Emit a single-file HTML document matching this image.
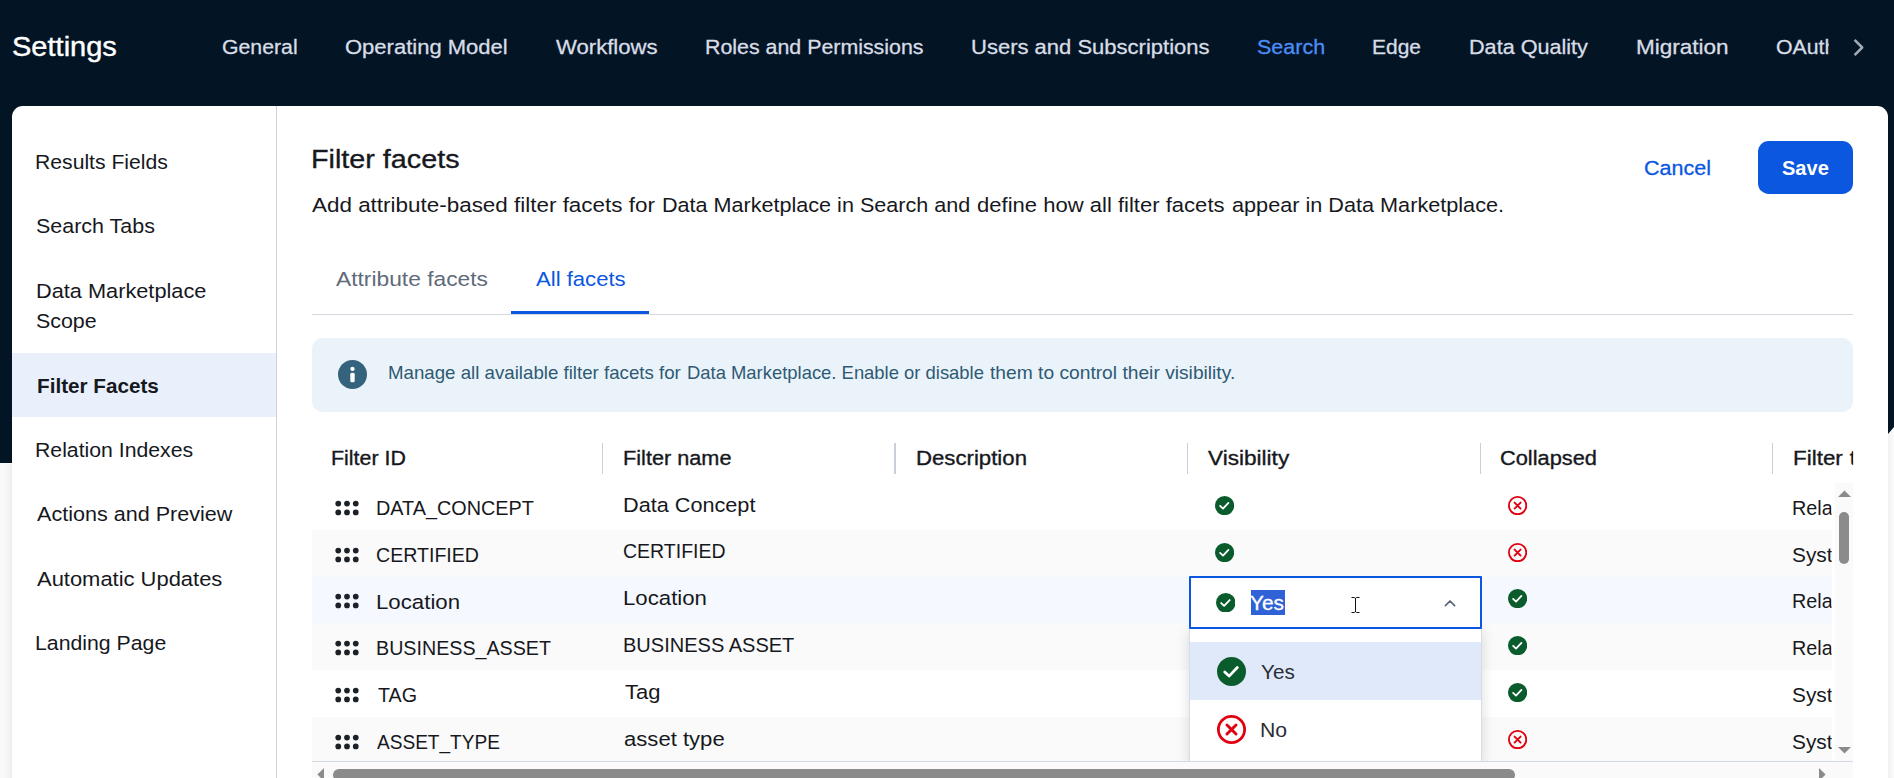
<!DOCTYPE html>
<html lang="en">
<head>
<meta charset="utf-8">
<title>Settings - Filter facets</title>
<style>
*{box-sizing:border-box;margin:0;padding:0}
html,body{width:1894px;height:778px;overflow:hidden}
body{position:relative;background:#f8f8f8;font-family:"Liberation Sans",sans-serif;color:#16181d;font-size:20px}
.abs{position:absolute}
.t{position:absolute;white-space:nowrap;line-height:30px;height:30px;transform-origin:0 50%}
#dark{position:absolute;left:0;top:0;width:1894px;height:463px;background:#031525;clip-path:polygon(0 0,1894px 0,1894px 427px,1888px 434px,1888px 463px,0 463px)}
#leftshade{position:absolute;left:0;top:464px;width:12px;height:314px;background:linear-gradient(to right,#fafafa 0,#f8f8f8 50%,#ededed 100%)}
#rightshade{position:absolute;left:1888px;top:420px;width:6px;height:358px;background:linear-gradient(to left,#fafafa 0,#f1f1f1 100%)}
#panel{position:absolute;left:12px;top:106px;width:1876px;height:700px;background:#fff;border-radius:10.7px 10.7px 0 0}
#sideborder{position:absolute;left:276px;top:106px;width:1px;height:672px;background:#cfd3dc}
#sel{position:absolute;left:12px;top:353px;width:264px;height:64px;background:#e9f0fb}
#savebtn{position:absolute;left:1758px;top:141px;width:95px;height:52.7px;border-radius:10.7px;background:#0b57e0}
#tabline{position:absolute;left:312px;top:314px;width:1541px;height:1px;background:#d3d7e0}
#tabul{position:absolute;left:511px;top:311px;width:138px;height:3px;background:#0b57e0}
#banner{position:absolute;left:312px;top:338px;width:1541px;height:73.7px;border-radius:10.7px;background:#ebf3fa}
.sep{position:absolute;top:443px;width:1.5px;height:31px;background:#c9cfdb}
.row{position:absolute;left:312px;width:1520px;height:46.8px}
.g{background:#fafafa}
.b{background:#f5f8fe}
</style>
</head>
<body>
<div id="leftshade"></div>
<div id="rightshade"></div>
<div id="dark"></div>

<!-- top nav -->
<span class="t" id="settings" style="left:12.22px;top:31.94px;font-size:27px;color:#fff;-webkit-text-stroke:0.4px #fff;transform:scaleX(1.0751)">Settings</span>
<span class="t" id="n1" style="left:222.35px;top:31.65px;font-size:20.5px;color:#d8dde6;-webkit-text-stroke:0.3px #d8dde6;transform:scaleX(1.0370)">General</span>
<span class="t" id="n2" style="left:345.24px;top:31.65px;font-size:20.5px;color:#d8dde6;-webkit-text-stroke:0.3px #d8dde6;transform:scaleX(1.0738)">Operating Model</span>
<span class="t" id="n3" style="left:555.59px;top:31.65px;font-size:20.5px;color:#d8dde6;-webkit-text-stroke:0.3px #d8dde6;transform:scaleX(1.0787)">Workflows</span>
<span class="t" id="n4" style="left:705.15px;top:31.65px;font-size:20.5px;color:#d8dde6;-webkit-text-stroke:0.3px #d8dde6;transform:scaleX(1.0421)">Roles and Permissions</span>
<span class="t" id="n5" style="left:971.11px;top:31.65px;font-size:20.5px;color:#d8dde6;-webkit-text-stroke:0.3px #d8dde6;transform:scaleX(1.0734)">Users and Subscriptions</span>
<span class="t" id="n6" style="left:1256.92px;top:31.65px;font-size:20.5px;color:#4c8df6;-webkit-text-stroke:0.3px #4c8df6;transform:scaleX(1.0485)">Search</span>
<span class="t" id="n7" style="left:1371.97px;top:31.65px;font-size:20.5px;color:#d8dde6;-webkit-text-stroke:0.3px #d8dde6;transform:scaleX(1.0220)">Edge</span>
<span class="t" id="n8" style="left:1468.73px;top:31.65px;font-size:20.5px;color:#d8dde6;-webkit-text-stroke:0.3px #d8dde6;transform:scaleX(1.0542)">Data Quality</span>
<span class="t" id="n9" style="left:1635.50px;top:31.65px;font-size:20.5px;color:#d8dde6;-webkit-text-stroke:0.3px #d8dde6;transform:scaleX(1.0983)">Migration</span>
<span class="t" id="n10" style="left:1776.15px;top:31.65px;font-size:20.5px;color:#d8dde6;-webkit-text-stroke:0.3px #d8dde6;transform:scaleX(1.0358);width:51.32px;overflow:hidden">OAuth</span>
<svg class="abs" id="navchev" style="left:1846px;top:35px" width="24" height="25" viewBox="0 0 24 25"><path d="M8.6 4.9 L16.2 12.5 L8.6 20.1" fill="none" stroke="#a2a9b4" stroke-width="2.5" stroke-linecap="butt" stroke-linejoin="round"/></svg>

<div id="panel"></div>
<div id="sel"></div>
<div id="sideborder"></div>

<!-- sidebar -->
<span class="t" id="s1" style="left:35.43px;top:146.90px;font-size:20.5px;color:#16181d;transform:scaleX(1.0322)">Results Fields</span>
<span class="t" id="s2" style="left:36.14px;top:211.10px;font-size:20.5px;color:#16181d;transform:scaleX(1.0466)">Search Tabs</span>
<span class="t" id="s3" style="left:35.56px;top:275.90px;font-size:20.5px;color:#16181d;transform:scaleX(1.0605)">Data Marketplace</span>
<span class="t" id="s3b" style="left:36.13px;top:305.60px;font-size:20.5px;color:#16181d;transform:scaleX(1.0436)">Scope</span>
<span class="t" id="s4" style="left:36.57px;top:370.80px;font-size:20.5px;color:#16181d;font-weight:bold;transform:scaleX(1.0090)">Filter Facets</span>
<span class="t" id="s5" style="left:35.41px;top:434.60px;font-size:20.5px;color:#16181d;transform:scaleX(1.0356)">Relation Indexes</span>
<span class="t" id="s6" style="left:36.86px;top:498.60px;font-size:20.5px;color:#16181d;transform:scaleX(1.0517)">Actions and Preview</span>
<span class="t" id="s7" style="left:36.60px;top:563.70px;font-size:20.5px;color:#16181d;transform:scaleX(1.0700)">Automatic Updates</span>
<span class="t" id="s8" style="left:35.41px;top:627.70px;font-size:20.5px;color:#16181d;transform:scaleX(1.0369)">Landing Page</span>

<!-- content header -->
<span class="t" id="title" style="left:310.87px;top:143.79px;font-size:26px;color:#16181d;-webkit-text-stroke:0.35px #16181d;transform:scaleX(1.1053)">Filter facets</span>
<span class="t" id="desc0" style="left:312.23px;top:190.00px;font-size:20.5px;color:#16181d;transform:scaleX(1.0943)">Add attribute-based filter facets for</span><span class="t" id="desc1" style="left:661.70px;top:190.00px;font-size:20.5px;color:#16181d;transform:scaleX(1.0526)">Data Marketplace in Search and</span><span class="t" id="desc2" style="left:976.91px;top:190.00px;font-size:20.5px;color:#16181d;transform:scaleX(1.0754)">define how all filter facets</span><span class="t" id="desc3" style="left:1231.88px;top:190.00px;font-size:20.5px;color:#16181d;transform:scaleX(1.0564)">appear in Data Marketplace.</span>
<span class="t" id="cancel" style="left:1644.33px;top:152.80px;font-size:20.5px;color:#0b57e0;-webkit-text-stroke:0.3px #0b57e0;transform:scaleX(1.0494)">Cancel</span>
<div id="savebtn"></div>
<span class="t" id="save" style="left:1781.52px;top:152.80px;font-size:20.5px;color:#fff;font-weight:bold;transform:scaleX(0.9768)">Save</span>
<span class="t" id="tab1" style="left:335.93px;top:263.90px;font-size:20.5px;color:#5f6b7a;transform:scaleX(1.1117)">Attribute facets</span>
<span class="t" id="tab2" style="left:535.93px;top:263.90px;font-size:20.5px;color:#0b57e0;transform:scaleX(1.0777)">All facets</span>
<div id="tabline"></div>
<div id="tabul"></div>

<!-- info banner -->
<div id="banner"></div>
<svg class="abs" id="infoicon" style="left:338px;top:360px" width="29" height="29" viewBox="0 0 29 29"><circle cx="14.5" cy="14.5" r="14.5" fill="#35627c"/><circle cx="14.5" cy="8.9" r="2.15" fill="#fff"/><rect x="12.3" y="12.7" width="4.4" height="9.6" rx="1.6" fill="#fff"/></svg>
<span class="t" id="info0" style="left:387.58px;top:357.62px;font-size:18.4px;color:#2e5a74;transform:scaleX(1.0157)">Manage all available filter facets for</span><span class="t" id="info1" style="left:686.83px;top:357.62px;font-size:18.4px;color:#2e5a74;transform:scaleX(1.0016)">Data Marketplace. Enable or disable</span><span class="t" id="info2" style="left:989.77px;top:357.62px;font-size:18.4px;color:#2e5a74;transform:scaleX(1.0447)">them to control their visibility.</span>

<!-- table header -->
<span class="t" id="h1" style="left:330.58px;top:443.30px;font-size:20.5px;color:#16181d;-webkit-text-stroke:0.35px #16181d;transform:scaleX(1.0433)">Filter ID</span>
<span class="t" id="h2" style="left:623.05px;top:443.30px;font-size:20.5px;color:#16181d;-webkit-text-stroke:0.35px #16181d;transform:scaleX(1.0581)">Filter name</span>
<span class="t" id="h3" style="left:915.92px;top:443.30px;font-size:20.5px;color:#16181d;-webkit-text-stroke:0.35px #16181d;transform:scaleX(1.0823)">Description</span>
<span class="t" id="h4" style="left:1208.33px;top:443.30px;font-size:20.5px;color:#16181d;-webkit-text-stroke:0.35px #16181d;transform:scaleX(1.1020)">Visibility</span>
<span class="t" id="h5" style="left:1499.91px;top:443.30px;font-size:20.5px;color:#16181d;-webkit-text-stroke:0.35px #16181d;transform:scaleX(1.0637)">Collapsed</span>
<span class="t" id="h6" style="left:1793.21px;top:443.30px;font-size:20.5px;color:#16181d;-webkit-text-stroke:0.35px #16181d;word-spacing:0.6px;transform:scaleX(1.0937);width:54.67px;overflow:hidden">Filter type</span>
<div class="sep" style="left:601.8px"></div>
<div class="sep" style="left:894.3px"></div>
<div class="sep" style="left:1186.8px"></div>
<div class="sep" style="left:1479.5px"></div>
<div class="sep" style="left:1771.8px"></div>

<div class="row " style="top:483.00px"></div>
<svg class="abs" style="left:335.10px;top:499.70px" width="24" height="16" viewBox="0 0 24 16" fill="#1c2127"><circle cx="3.25" cy="3.58" r="2.85"/><circle cx="3.25" cy="12.42" r="2.85"/><circle cx="12" cy="3.58" r="2.85"/><circle cx="12" cy="12.42" r="2.85"/><circle cx="20.75" cy="3.58" r="2.85"/><circle cx="20.75" cy="12.42" r="2.85"/></svg>
<span class="t" id="id0" style="left:376.48px;top:492.90px;font-size:20.5px;color:#16181d;transform:scaleX(0.9671)">DATA_CONCEPT</span>
<span class="t" id="nm0" style="left:622.96px;top:489.65px;font-size:20.5px;color:#16181d;transform:scaleX(1.0564)">Data Concept</span>
<span class="t" id="ty0" style="left:1792.30px;top:492.70px;font-size:20.5px;color:#16181d;transform:scaleX(0.9634);width:41.21px;overflow:hidden">Relation</span>
<div class="row g" style="top:529.80px"></div>
<svg class="abs" style="left:335.10px;top:546.50px" width="24" height="16" viewBox="0 0 24 16" fill="#1c2127"><circle cx="3.25" cy="3.58" r="2.85"/><circle cx="3.25" cy="12.42" r="2.85"/><circle cx="12" cy="3.58" r="2.85"/><circle cx="12" cy="12.42" r="2.85"/><circle cx="20.75" cy="3.58" r="2.85"/><circle cx="20.75" cy="12.42" r="2.85"/></svg>
<span class="t" id="id1" style="left:376.20px;top:539.70px;font-size:20.5px;color:#16181d;transform:scaleX(0.9551)">CERTIFIED</span>
<span class="t" id="nm1" style="left:623.28px;top:536.45px;font-size:20.5px;color:#16181d;transform:scaleX(0.9515)">CERTIFIED</span>
<span class="t" id="ty1" style="left:1792.32px;top:539.50px;font-size:20.5px;color:#16181d;transform:scaleX(1.0170);width:39.02px;overflow:hidden">System</span>
<div class="row b" style="top:576.60px"></div>
<svg class="abs" style="left:335.10px;top:593.30px" width="24" height="16" viewBox="0 0 24 16" fill="#1c2127"><circle cx="3.25" cy="3.58" r="2.85"/><circle cx="3.25" cy="12.42" r="2.85"/><circle cx="12" cy="3.58" r="2.85"/><circle cx="12" cy="12.42" r="2.85"/><circle cx="20.75" cy="3.58" r="2.85"/><circle cx="20.75" cy="12.42" r="2.85"/></svg>
<span class="t" id="id2" style="left:375.80px;top:586.50px;font-size:20.5px;color:#16181d;transform:scaleX(1.0843)">Location</span>
<span class="t" id="nm2" style="left:622.84px;top:583.25px;font-size:20.5px;color:#16181d;transform:scaleX(1.0829)">Location</span>
<span class="t" id="ty2" style="left:1792.30px;top:586.30px;font-size:20.5px;color:#16181d;transform:scaleX(0.9634);width:41.21px;overflow:hidden">Relation</span>
<div class="row g" style="top:623.40px"></div>
<svg class="abs" style="left:335.10px;top:640.10px" width="24" height="16" viewBox="0 0 24 16" fill="#1c2127"><circle cx="3.25" cy="3.58" r="2.85"/><circle cx="3.25" cy="12.42" r="2.85"/><circle cx="12" cy="3.58" r="2.85"/><circle cx="12" cy="12.42" r="2.85"/><circle cx="20.75" cy="3.58" r="2.85"/><circle cx="20.75" cy="12.42" r="2.85"/></svg>
<span class="t" id="id3" style="left:376.39px;top:633.30px;font-size:20.5px;color:#16181d;transform:scaleX(0.9600)">BUSINESS_ASSET</span>
<span class="t" id="nm3" style="left:623.10px;top:630.05px;font-size:20.5px;color:#16181d;transform:scaleX(0.9765)">BUSINESS ASSET</span>
<span class="t" id="ty3" style="left:1792.30px;top:633.10px;font-size:20.5px;color:#16181d;transform:scaleX(0.9634);width:41.21px;overflow:hidden">Relation</span>
<div class="row " style="top:670.20px"></div>
<svg class="abs" style="left:335.10px;top:686.90px" width="24" height="16" viewBox="0 0 24 16" fill="#1c2127"><circle cx="3.25" cy="3.58" r="2.85"/><circle cx="3.25" cy="12.42" r="2.85"/><circle cx="12" cy="3.58" r="2.85"/><circle cx="12" cy="12.42" r="2.85"/><circle cx="20.75" cy="3.58" r="2.85"/><circle cx="20.75" cy="12.42" r="2.85"/></svg>
<span class="t" id="id4" style="left:377.70px;top:680.10px;font-size:20.5px;color:#16181d;transform:scaleX(0.9608)">TAG</span>
<span class="t" id="nm4" style="left:624.54px;top:676.85px;font-size:20.5px;color:#16181d;transform:scaleX(1.0723)">Tag</span>
<span class="t" id="ty4" style="left:1792.32px;top:679.90px;font-size:20.5px;color:#16181d;transform:scaleX(1.0170);width:39.02px;overflow:hidden">System</span>
<div class="row g" style="top:717.00px"></div>
<svg class="abs" style="left:335.10px;top:733.70px" width="24" height="16" viewBox="0 0 24 16" fill="#1c2127"><circle cx="3.25" cy="3.58" r="2.85"/><circle cx="3.25" cy="12.42" r="2.85"/><circle cx="12" cy="3.58" r="2.85"/><circle cx="12" cy="12.42" r="2.85"/><circle cx="20.75" cy="3.58" r="2.85"/><circle cx="20.75" cy="12.42" r="2.85"/></svg>
<span class="t" id="id5" style="left:377.21px;top:726.90px;font-size:20.5px;color:#16181d;transform:scaleX(0.9296)">ASSET_TYPE</span>
<span class="t" id="nm5" style="left:623.62px;top:723.65px;font-size:20.5px;color:#16181d;transform:scaleX(1.0776)">asset type</span>
<span class="t" id="ty5" style="left:1792.32px;top:726.70px;font-size:20.5px;color:#16181d;transform:scaleX(1.0170);width:39.02px;overflow:hidden">System</span>
<svg class="abs" style="left:1214.50px;top:495.70px" width="19.2" height="19.2" viewBox="0 0 24 24"><circle cx="12" cy="12" r="12" fill="#0b5c2c"/><path d="M6.4 12.4 L10.0 15.8 L16.8 8.7" fill="none" stroke="#fff" stroke-width="2.3" stroke-linecap="round" stroke-linejoin="round"/></svg>
<svg class="abs" style="left:1507.50px;top:495.70px" width="19.2" height="19.2" viewBox="0 0 24 24"><circle cx="12" cy="12" r="10.85" fill="none" stroke="#e0000f" stroke-width="2.3"/><path d="M8.25 8.25 L15.75 15.75 M15.75 8.25 L8.25 15.75" fill="none" stroke="#e0000f" stroke-width="2.4" stroke-linecap="round"/></svg>
<svg class="abs" style="left:1214.50px;top:542.50px" width="19.2" height="19.2" viewBox="0 0 24 24"><circle cx="12" cy="12" r="12" fill="#0b5c2c"/><path d="M6.4 12.4 L10.0 15.8 L16.8 8.7" fill="none" stroke="#fff" stroke-width="2.3" stroke-linecap="round" stroke-linejoin="round"/></svg>
<svg class="abs" style="left:1507.50px;top:542.50px" width="19.2" height="19.2" viewBox="0 0 24 24"><circle cx="12" cy="12" r="10.85" fill="none" stroke="#e0000f" stroke-width="2.3"/><path d="M8.25 8.25 L15.75 15.75 M15.75 8.25 L8.25 15.75" fill="none" stroke="#e0000f" stroke-width="2.4" stroke-linecap="round"/></svg>
<svg class="abs" style="left:1507.50px;top:589.30px" width="19.2" height="19.2" viewBox="0 0 24 24"><circle cx="12" cy="12" r="12" fill="#0b5c2c"/><path d="M6.4 12.4 L10.0 15.8 L16.8 8.7" fill="none" stroke="#fff" stroke-width="2.3" stroke-linecap="round" stroke-linejoin="round"/></svg>
<svg class="abs" style="left:1507.50px;top:636.10px" width="19.2" height="19.2" viewBox="0 0 24 24"><circle cx="12" cy="12" r="12" fill="#0b5c2c"/><path d="M6.4 12.4 L10.0 15.8 L16.8 8.7" fill="none" stroke="#fff" stroke-width="2.3" stroke-linecap="round" stroke-linejoin="round"/></svg>
<svg class="abs" style="left:1507.50px;top:682.90px" width="19.2" height="19.2" viewBox="0 0 24 24"><circle cx="12" cy="12" r="12" fill="#0b5c2c"/><path d="M6.4 12.4 L10.0 15.8 L16.8 8.7" fill="none" stroke="#fff" stroke-width="2.3" stroke-linecap="round" stroke-linejoin="round"/></svg>
<svg class="abs" style="left:1507.50px;top:729.70px" width="19.2" height="19.2" viewBox="0 0 24 24"><circle cx="12" cy="12" r="10.85" fill="none" stroke="#e0000f" stroke-width="2.3"/><path d="M8.25 8.25 L15.75 15.75 M15.75 8.25 L8.25 15.75" fill="none" stroke="#e0000f" stroke-width="2.4" stroke-linecap="round"/></svg>
<div class="abs" id="vtrack" style="left:1835px;top:483px;width:18px;height:279px;background:#fafafa"></div>
<svg class="abs" style="left:1837.5px;top:489.5px" width="13" height="7" viewBox="0 0 13 7"><path d="M0 7 L6.5 0.4 L13 7 Z" fill="#8b8b8b"/></svg>
<svg class="abs" style="left:1837.5px;top:746.5px" width="13" height="7" viewBox="0 0 13 7"><path d="M0 0 L6.5 6.6 L13 0 Z" fill="#8b8b8b"/></svg>
<div class="abs" id="vthumb" style="left:1839px;top:512px;width:10px;height:52px;border-radius:5px;background:#8b8b8b"></div>
<div class="abs" id="dd" style="left:1189px;top:628px;width:293px;height:133.5px;background:#fff;border:1px solid #d9dce4;border-top:none;border-bottom:none;box-shadow:0 4px 12px rgba(20,30,50,0.16)"></div>
<div class="abs" id="ddhi" style="left:1190px;top:642.2px;width:291px;height:57.5px;background:#dfe9fa"></div>
<svg class="abs" style="left:1217.10px;top:657.30px" width="29" height="29" viewBox="0 0 24 24"><circle cx="12" cy="12" r="12" fill="#0b5c2c"/><path d="M6.4 12.4 L10.0 15.8 L16.8 8.7" fill="none" stroke="#fff" stroke-width="2.3" stroke-linecap="round" stroke-linejoin="round"/></svg>
<span class="t" id="ddyes" style="left:1260.98px;top:657.20px;font-size:20.5px;color:#2a2e36;transform:scaleX(1.0082)">Yes</span>
<svg class="abs" style="left:1217.10px;top:715.30px" width="29" height="29" viewBox="0 0 24 24"><circle cx="12" cy="12" r="10.85" fill="none" stroke="#e0000f" stroke-width="2.3"/><path d="M8.25 8.25 L15.75 15.75 M15.75 8.25 L8.25 15.75" fill="none" stroke="#e0000f" stroke-width="2.4" stroke-linecap="round"/></svg>
<span class="t" id="ddno" style="left:1260.26px;top:714.90px;font-size:20.5px;color:#2a2e36;transform:scaleX(1.0338)">No</span>
<div class="abs" id="htrack" style="left:312px;top:761px;width:1541px;height:17px;background:#fafafa;border-top:1px solid #d3d9e2"></div>
<svg class="abs" style="left:316.8px;top:767.5px" width="7" height="13" viewBox="0 0 7 13"><path d="M7 0 L0.4 6.5 L7 13 Z" fill="#8b8b8b"/></svg>
<svg class="abs" style="left:1818.5px;top:767.5px" width="7" height="13" viewBox="0 0 7 13"><path d="M0 0 L6.6 6.5 L0 13 Z" fill="#8b8b8b"/></svg>
<div class="abs" id="hthumb" style="left:333px;top:769px;width:1182px;height:12px;border-radius:6px;background:#8b8b8b"></div>
<div class="abs" id="selbox" style="left:1189px;top:576px;width:293px;height:53px;background:#fff;border:2px solid #0b57e0;border-radius:1px"></div>
<svg class="abs" style="left:1215.55px;top:592.95px" width="19.5" height="19.5" viewBox="0 0 24 24"><circle cx="12" cy="12" r="12" fill="#0b5c2c"/><path d="M6.4 12.4 L10.0 15.8 L16.8 8.7" fill="none" stroke="#fff" stroke-width="2.3" stroke-linecap="round" stroke-linejoin="round"/></svg>
<div class="abs" id="yeshi" style="left:1251px;top:590.3px;width:33.8px;height:24.8px;background:#2f62d6"></div>
<span class="t" id="selyes" style="left:1250.34px;top:587.60px;font-size:20.5px;color:#fff;-webkit-text-stroke:0.3px #fff;transform:scaleX(1.0162)">Yes</span>
<svg class="abs" id="selchev" style="left:1441.5px;top:595.3px" width="16" height="16" viewBox="0 0 16 16"><path d="M3.4 10.6 L8 6 L12.6 10.6" fill="none" stroke="#5a6577" stroke-width="1.7" stroke-linecap="round" stroke-linejoin="round"/></svg>
<svg class="abs" id="ibeam" style="left:1351px;top:596px" width="9" height="18" viewBox="0 0 9 18"><path d="M0.5 1.5 H3.3 M5.7 1.5 H8.5 M0.5 16.5 H3.3 M5.7 16.5 H8.5 M4.5 2 V16" stroke="#111" stroke-width="1" fill="none"/><path d="M3.3 1.5 L4.5 2.3 L5.7 1.5 M3.3 16.5 L4.5 15.7 L5.7 16.5" stroke="#111" stroke-width="0.9" fill="none"/></svg>
</body>
</html>
